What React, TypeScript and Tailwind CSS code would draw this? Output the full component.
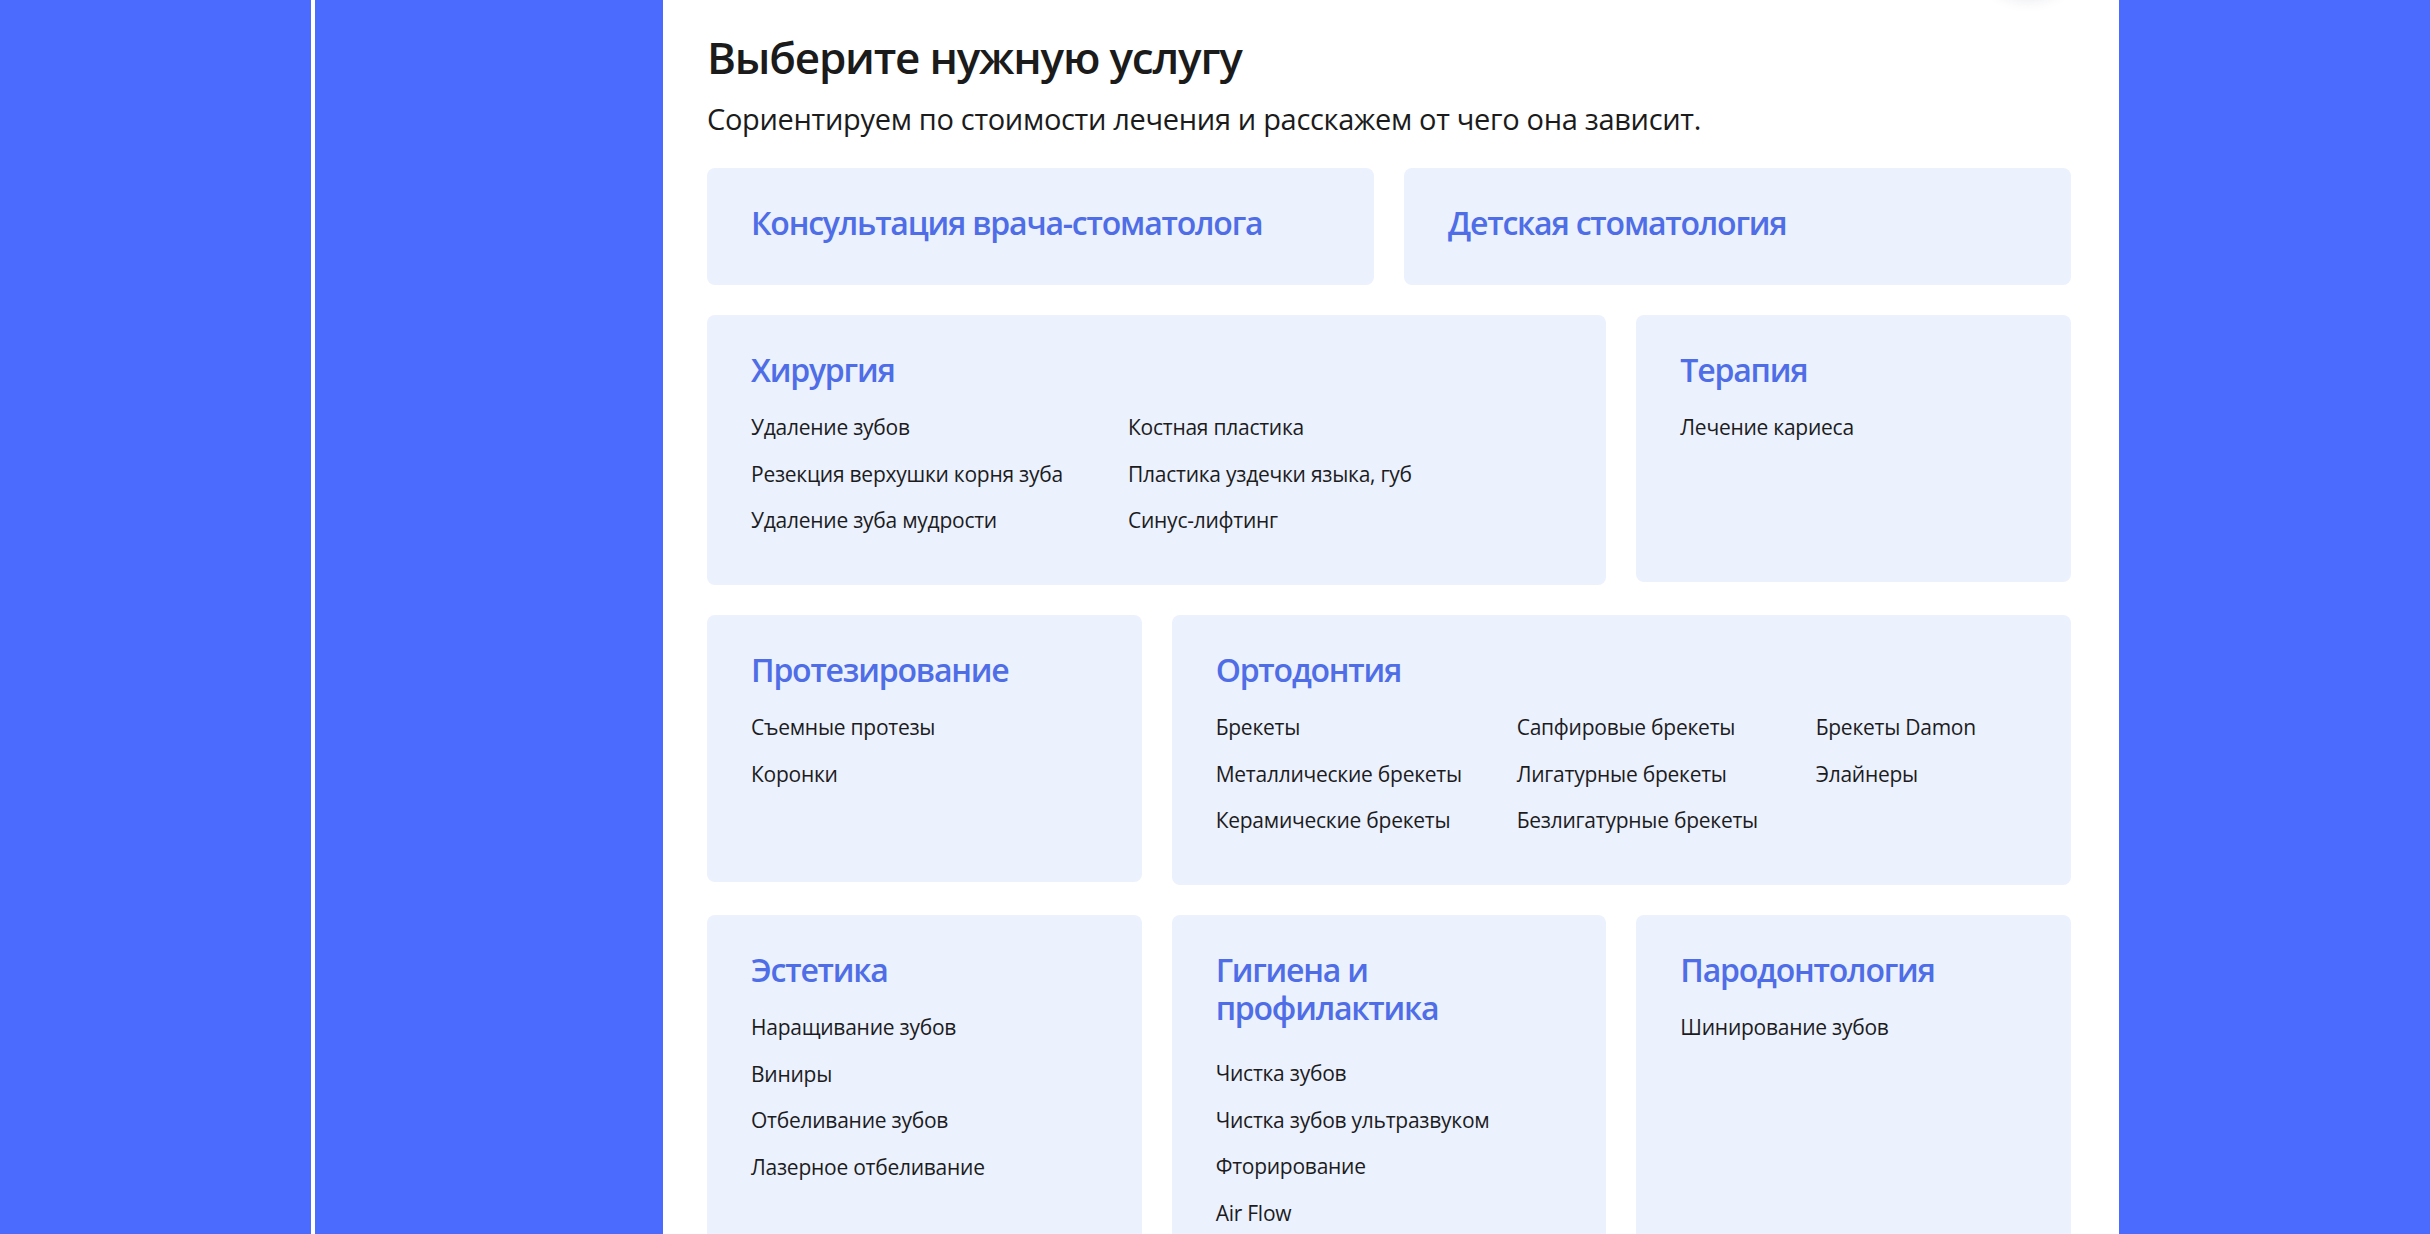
import React from "react";

type Card = {
  title: string;
  span: string;
  cols?: { w?: string; items: string[] }[];
  extraTop?: boolean;
  compact?: boolean;
  tall?: boolean;
};

const cards: Card[] = [
  { title: "Консультация врача-стоматолога", span: "col-span-3", compact: true },
  { title: "Детская стоматология", span: "col-span-3", compact: true },
  {
    title: "Хирургия",
    span: "col-span-4",
    cols: [
      { w: "w-[377px]", items: ["Удаление зубов", "Резекция верхушки корня зуба", "Удаление зуба мудрости"] },
      { items: ["Костная пластика", "Пластика уздечки языка, губ", "Синус-лифтинг"] },
    ],
  },
  { title: "Терапия", span: "col-span-2", cols: [{ items: ["Лечение кариеса"] }] },
  { title: "Протезирование", span: "col-span-2", cols: [{ items: ["Съемные протезы", "Коронки"] }] },
  {
    title: "Ортодонтия",
    span: "col-span-4",
    cols: [
      { w: "w-[301px]", items: ["Брекеты", "Металлические брекеты", "Керамические брекеты"] },
      { w: "w-[299px]", items: ["Сапфировые брекеты", "Лигатурные брекеты", "Безлигатурные брекеты"] },
      { items: ["Брекеты Damon", "Элайнеры"] },
    ],
  },
  {
    title: "Эстетика",
    span: "col-span-2",
    tall: true,
    cols: [{ items: ["Наращивание зубов", "Виниры", "Отбеливание зубов", "Лазерное отбеливание"] }],
  },
  {
    title: "Гигиена и профилактика",
    span: "col-span-2",
    extraTop: true,
    tall: true,
    cols: [{ items: ["Чистка зубов", "Чистка зубов ультразвуком", "Фторирование", "Air Flow"] }],
  },
  { title: "Пародонтология", span: "col-span-2", tall: true, cols: [{ items: ["Шинирование зубов"] }] },
];

function ServiceCard({ card }: { card: Card }) {
  if (card.compact) {
    return (
      <div className={`${card.span} rounded-[8px] bg-[#ebf1fd] pl-[44px] pr-[40px] pt-[36px] pb-[43px]`}>
        <div className="text-[32px] leading-[38px] font-semibold text-[#4e6de6] tracking-[-1.2px]">{card.title}</div>
      </div>
    );
  }
  return (
    <div
      className={`${card.span} ${card.tall ? "min-h-[360px]" : "min-h-[267px]"} rounded-[8px] bg-[#ebf1fd] pl-[44px] pr-[40px] pt-[36px] pb-[41px]`}
    >
      <div className="text-[32px] leading-[38px] font-semibold text-[#4e6de6] tracking-[-1.2px] max-w-[300px]">
        {card.title}
      </div>
      <div className={`flex ${card.extraTop ? "mt-[23px]" : "mt-[15px]"}`}>
        {card.cols?.map((col, i) => (
          <div key={i} className={`flex flex-col ${col.w ?? ""}`}>
            {col.items.map((it) => (
              <div key={it} className="text-[21px] leading-[46.67px] text-[#1c1c1e] whitespace-nowrap tracking-[-0.25px]">
                {it}
              </div>
            ))}
          </div>
        ))}
      </div>
    </div>
  );
}

export default function App() {
  return (
    <div
      className="flex h-[1234px] w-full overflow-hidden bg-[#4b6bff]"
      style={{ fontFamily: '"Open Sans", "Noto Sans", sans-serif' }}
    >
      <div className="w-[311px] shrink-0" />
      <div className="w-[4px] shrink-0 bg-white" />
      <div className="w-[348px] shrink-0" />
      <div className="relative w-[1456px] shrink-0 bg-white pl-[44px] pr-[48px] pt-[31px]">
        <div className="absolute left-[1310px] top-[-112px] h-[110px] w-[110px] rounded-full bg-white shadow-[0_2px_14px_rgba(30,40,90,0.10)]" />
        <h1 className="text-[44px] leading-[52px] font-semibold text-[#1b1b1b] tracking-[-1.2px]">
          Выберите нужную услугу
        </h1>
        <p className="mt-[18px] text-[29px] leading-[36px] text-[#1b1b1b] tracking-[-0.32px]">
          Сориентируем по стоимости лечения и расскажем от чего она зависит.
        </p>
        <div className="mt-[31px] grid grid-cols-6 items-start gap-x-[30px] gap-y-[30px]">
          {cards.map((c) => (
            <ServiceCard key={c.title} card={c} />
          ))}
        </div>
      </div>
      <div className="flex-1" />
    </div>
  );
}
